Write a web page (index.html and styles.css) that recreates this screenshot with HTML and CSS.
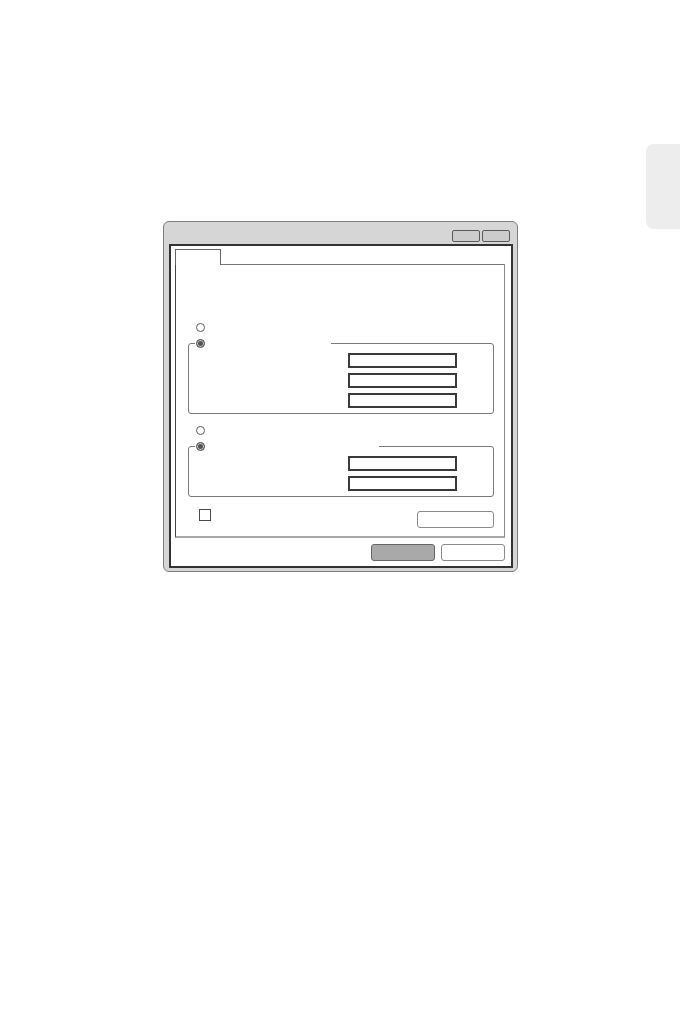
FILE: index.html
```html
<!DOCTYPE html>
<html lang="en">
<head>
<meta charset="utf-8">
<title>Dialog</title>
<link rel="stylesheet" href="styles.css">
</head>
<body>
<div class="page">
  <div class="thumb-tab"></div>
  <div class="window">
    <div class="titlebar">
      <span class="tb-btn"></span>
      <span class="tb-btn"></span>
    </div>
    <div class="inner">
      <div class="tab"></div>
      <div class="panel">
        <div class="radio-row first"><span class="radio"></span></div>
        <div class="group">
          <div class="legend legend-a"><span class="radio on"></span></div>
          <div class="fields">
            <span class="field"></span>
            <span class="field"></span>
            <span class="field"></span>
          </div>
        </div>
        <div class="radio-row second"><span class="radio"></span></div>
        <div class="group">
          <div class="legend legend-b"><span class="radio on"></span></div>
          <div class="fields">
            <span class="field"></span>
            <span class="field"></span>
          </div>
        </div>
        <div class="check-row">
          <span class="checkbox"></span>
          <span class="btn panel-btn"></span>
        </div>
      </div>
      <div class="footer">
        <span class="btn btn-primary"></span>
        <span class="btn"></span>
      </div>
    </div>
  </div>
</div>
</body>
</html>
```

FILE: styles.css
```css
html, body {
  margin: 0;
  padding: 0;
  background: #ffffff;
  font-family: "Liberation Sans", Arial, sans-serif;
}

.page {
  display: grid;
  width: 680px;
  height: 1020px;
}

.thumb-tab {
  grid-area: 1 / 1;
  justify-self: end;
  align-self: start;
  margin-top: 144px;
  width: 34px;
  height: 85px;
  background: #ededed;
  border-radius: 8px 0 0 8px;
}

.window {
  grid-area: 1 / 1;
  justify-self: start;
  align-self: start;
  margin: 221px 0 0 163px;
  box-sizing: border-box;
  width: 355px;
  height: 351px;
  border: 1px solid #7d7d7d;
  border-radius: 6px;
  background: #d6d6d6;
  padding: 0 4px 3px 5px;
  display: flex;
  flex-direction: column;
}

.titlebar {
  height: 22px;
  display: flex;
  justify-content: flex-end;
  align-items: flex-end;
  gap: 2px;
  padding: 0 3px 2px 0;
  box-sizing: border-box;
}

.tb-btn {
  box-sizing: border-box;
  width: 28px;
  height: 12px;
  border: 1px solid #5a5a5a;
  border-radius: 2px;
  background: #cccccc;
}

.inner {
  flex: 1;
  border: 2px solid #333333;
  background: #ffffff;
  padding: 3px 6px 0 4px;
  display: flex;
  flex-direction: column;
}

.tab {
  box-sizing: border-box;
  width: 46px;
  height: 16px;
  border: 1px solid #666666;
  border-bottom: none;
  background: #ffffff;
  margin-bottom: -1px;
  position: relative;
  z-index: 1;
}

.panel {
  box-sizing: border-box;
  height: 274px;
  border-top: 1px solid #777777;
  border-left: 1px solid #444444;
  border-right: 1px solid #8a8a8a;
  border-bottom: 2px solid #a8a8a8;
  padding: 58px 10px 0 12px;
  display: flex;
  flex-direction: column;
}

.radio-row {
  display: flex;
  margin-left: 8px;
}

.radio-row.second {
  margin-top: 12px;
}

.radio {
  box-sizing: border-box;
  display: block;
  width: 9px;
  height: 9px;
  border: 1px solid #5c5c5c;
  border-radius: 50%;
  background: #ffffff;
}

.radio.on {
  background: #555555;
  box-shadow: inset 0 0 0 1px #c8c8c8;
}

.group {
  margin-top: 11px;
  border: 1px solid #7a7a7a;
  border-radius: 3px;
  display: flex;
  flex-direction: column;
  padding-bottom: 5px;
}

.legend {
  margin: -5px 0 0 6px;
  padding-left: 1px;
  height: 9px;
  background: #ffffff;
}

.legend-a { width: 135px; }
.legend-b { width: 183px; }

.fields {
  margin: 5px 0 0 159px;
  display: flex;
  flex-direction: column;
  gap: 5px;
}

.field {
  box-sizing: border-box;
  display: block;
  width: 109px;
  height: 15px;
  border: 2px solid #3a3a3a;
  background: #ffffff;
}

.check-row {
  margin-top: 12px;
  display: flex;
  justify-content: space-between;
  align-items: flex-start;
  padding-left: 11px;
}

.checkbox {
  box-sizing: border-box;
  width: 12px;
  height: 12px;
  border: 1px solid #4a4a4a;
  background: #ffffff;
}

.btn {
  box-sizing: border-box;
  display: block;
  width: 64px;
  height: 17px;
  border: 1px solid #8a8a8a;
  border-radius: 3px;
  background: #ffffff;
}

.panel-btn {
  margin-top: 2px;
  width: 77px;
  height: 17px;
}

.footer {
  margin-top: 6px;
  display: flex;
  justify-content: flex-end;
  gap: 6px;
}

.btn-primary {
  background: #a9a9a9;
  border-color: #666666;
}
```
